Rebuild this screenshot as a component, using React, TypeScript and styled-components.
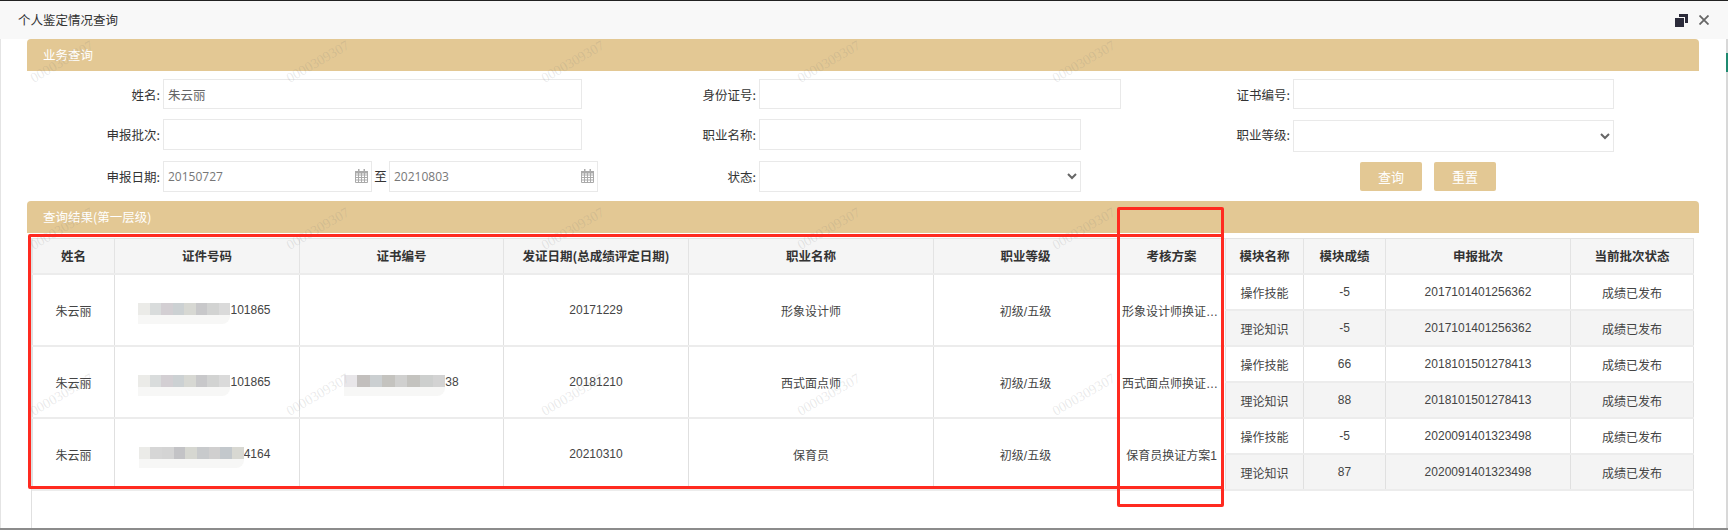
import React, { FC } from "react";
import styled, { createGlobalStyle } from "styled-components";

const GlobalStyle = createGlobalStyle`
  html, body {
    margin: 0;
    padding: 0;
    background: #fff;
  }
  body {
    font-family: "Noto Sans CJK SC", "Liberation Sans", sans-serif;
    font-size: 12.5px;
    color: #333;
  }
`;

const Window = styled.div`
  position: relative;
  width: 1728px;
  height: 530px;
  box-sizing: border-box;
  display: flex;
  flex-direction: column;
  overflow: hidden;
  border-bottom: 2px solid #8c8c8c;
  box-shadow: inset 1px 0 #e4e4e4;
`;

const TitleBar = styled.div`
  flex: none;
  height: 39px;
  box-sizing: border-box;
  display: flex;
  align-items: center;
  padding: 0 19px 0 18px;
  background: #f8f8f8;
  border-top: 1px solid #222;
  color: #333;
  font-size: 12.5px;
`;

const TitleText = styled.span`
  flex: 1;
  line-height: 38px;
`;

const TitleIcons = styled.div`
  display: flex;
  align-items: center;
  gap: 11px;
`;

const Content = styled.div`
  flex: 1;
  min-height: 0;
  display: flex;
  flex-direction: column;
  padding: 0 29px 0 27px;
`;

const PanelHead = styled.div`
  flex: none;
  height: 32px;
  line-height: 32px;
  padding-left: 16px;
  background: #e3c894;
  border-radius: 4px 4px 0 0;
  color: #fff;
  font-size: 12.5px;
`;

const QueryForm = styled.div`
  flex: none;
  display: grid;
  grid-template-columns: 136px 435px 161px 362px 172px 321px;
  grid-template-rows: 30px 31px 32px;
  row-gap: 10px;
  padding: 8px 0 9px;
`;

const FieldLabel = styled.label`
  align-self: center;
  text-align: right;
  padding-right: 3px;
  color: #333;
  font-size: 12.5px;
`;

const TextInput = styled.input<{ $w: number }>`
  width: ${(p) => p.$w}px;
  height: 100%;
  box-sizing: border-box;
  padding: 0 4px;
  border: 1px solid #e9e9e9;
  outline: none;
  background: #fff;
  color: #666;
  font-family: "Noto Sans CJK SC", sans-serif;
  font-size: 12.5px;
`;

const SelectBox = styled.select<{ $w: number; $tall?: boolean }>`
  width: ${(p) => p.$w}px;
  height: ${(p) => (p.$tall ? "32px" : "31px")};
  margin-top: 1px;
  box-sizing: border-box;
  border: 1px solid #e9e9e9;
  outline: none;
  background: #fff;
  color: #666;
`;

const DateRow = styled.div`
  display: flex;
  height: 31px;
  margin-top: 1px;
`;

const DateField = styled.div`
  position: relative;
  width: 209px;
  height: 100%;
`;

const DateInput = styled.input`
  width: 100%;
  height: 100%;
  box-sizing: border-box;
  padding: 0 4px;
  border: 1px solid #e9e9e9;
  outline: none;
  color: #777;
  font-family: "Open Sans", sans-serif;
  font-size: 12px;
`;

const CalendarMark = styled.svg`
  position: absolute;
  right: 4px;
  top: 8px;
`;

const RangeSep = styled.span`
  width: 17px;
  line-height: 29px;
  text-align: center;
  color: #333;
  font-size: 12.5px;
`;

const ButtonRow = styled.div`
  display: flex;
  gap: 12px;
  margin: 2px 0 0 67px;
`;

const QueryButton = styled.button`
  width: 62px;
  height: 29px;
  padding: 0;
  border: none;
  border-radius: 2px;
  background: #e3c894;
  color: #fff;
  font-family: "Noto Sans CJK SC", sans-serif;
  font-size: 13px;
`;

const TableFrame = styled.div`
  flex: 1;
  margin: 5px 5px 0 4px;
  border-left: 1px solid #e0e0e0;
  border-right: 1px solid #e0e0e0;
`;

const ResultTable = styled.table`
  width: 100%;
  table-layout: fixed;
  border-collapse: collapse;
`;

const Col = styled.col<{ $w: number }>`
  width: ${(p) => p.$w}px;
`;

const HeadCell = styled.th`
  height: 35px;
  padding: 0;
  box-sizing: border-box;
  background: #f5f5f5;
  border: 1px solid #e3e3e3;
  border-bottom: 2px solid #ececec;
  color: #333;
  font-size: 12.5px;
  font-weight: 700;
`;

const Cell = styled.td<{ $alt?: boolean }>`
  height: 36px;
  padding: 1px 4px 0;
  box-sizing: border-box;
  text-align: center;
  white-space: nowrap;
  overflow: hidden;
  text-overflow: ellipsis;
  background: ${(p) => (p.$alt ? "#f4f4f4" : "#fff")};
  border-left: 1px solid #e0e0e0;
  border-right: 1px solid #e0e0e0;
  border-bottom: 2px solid #ececec;
  color: #444;
  font-family: "Liberation Sans", "Noto Sans CJK SC", sans-serif;
  font-size: 12px;
`;

const IdValue = styled.span`
  margin-right: 5px;
`;

const Mosaic = styled.span`
  position: relative;
  display: inline-flex;
  height: 12px;
  vertical-align: middle;
  margin-top: -3px;
`;

const MosaicBlock = styled.i<{ $c: string }>`
  display: block;
  flex: 1;
  height: 12px;
  background: ${(p) => p.$c};
`;

const MosaicFade = styled.i`
  position: absolute;
  left: 0;
  right: 0;
  top: 12px;
  height: 9px;
  border-radius: 0 0 8px 0;
  background: #f7f7f6;
`;

const Watermarks = styled.div`
  position: absolute;
  left: 30px;
  top: 44px;
  display: grid;
  grid-template-columns: repeat(5, 255.5px);
  grid-auto-rows: 166.5px;
  pointer-events: none;
`;

const Watermark = styled.span`
  width: 64px;
  height: 36px;
  display: flex;
  align-items: center;
  justify-content: center;
  white-space: nowrap;
  transform: rotate(-30deg);
  font-family: "Liberation Serif", serif;
  font-size: 14px;
  color: rgba(120, 120, 120, 0.16);
`;

const Highlight = styled.div<{ $l: number; $t: number; $w: number; $h: number }>`
  position: absolute;
  left: ${(p) => p.$l}px;
  top: ${(p) => p.$t}px;
  width: ${(p) => p.$w}px;
  height: ${(p) => p.$h}px;
  box-sizing: border-box;
  border: 3px solid #ff2a20;
  border-radius: 2px;
  pointer-events: none;
`;

const RightEdge = styled.div`
  position: absolute;
  right: 0;
  top: 39px;
  bottom: 0;
  width: 2px;
  background: linear-gradient(#d8d8d8 14px, #1f8a70 14px, #1f8a70 33px, #d8d8d8 33px);
`;

const RestoreIcon: FC = () => (
  <svg width="13" height="13" viewBox="0 0 13 13">
    <rect x="0" y="4" width="9" height="9" fill="#2b2b3a" />
    <path d="M4 0h9v9h-3V3H4z" fill="#2b2b3a" />
  </svg>
);

const CloseIcon: FC = () => (
  <svg width="10" height="10" viewBox="0 0 10 10">
    <path d="M0.5 0.5l9 9M9.5 0.5l-9 9" stroke="#666" strokeWidth="1.8" fill="none" />
  </svg>
);

const CalendarIcon: FC = () => (
  <CalendarMark width="13" height="14" viewBox="0 0 13 14">
    <path
      d="M0.5 3v10.5h12V3zM0.5 6h12M0.5 8.5h12M0.5 11h12M3.5 3v10.5M6.5 3v10.5M9.5 3v10.5"
      stroke="#aaa"
      fill="none"
    />
    <rect x="0" y="2" width="13" height="2.5" fill="#aaa" />
    <rect x="3" y="0" width="1.5" height="3" fill="#aaa" />
    <rect x="8.5" y="0" width="1.5" height="3" fill="#aaa" />
  </CalendarMark>
);

const idShades = ["#ebebe8", "#d9dcdc", "#d3cfd3", "#ccd1d3", "#d7d8d3", "#c8c8ca", "#d2d3d2", "#dadada"];
const idShadesLong = ["#ebebe8", "#d6d6d6", "#d4d4d4", "#c3c3c6", "#d6d7d1", "#c8cacc", "#d0cfcf", "#c3c8cc", "#d8d8d2"];
const certShades = ["#e8e6e9", "#c2bfbd", "#cbcfd1", "#c4c3bf", "#d0d0cf", "#c4c3bf", "#cdcfce", "#d3d3d3"];

const Blurred: FC<{ shades: string[]; width: number }> = ({ shades, width }) => (
  <Mosaic style={{ width }}>
    {shades.map((c, i) => (
      <MosaicBlock key={i} $c={c} />
    ))}
    <MosaicFade />
  </Mosaic>
);

const columns = [82, 185, 204, 185, 245, 184, 108, 78, 82, 185, 123];
const headers = [
  "姓名",
  "证件号码",
  "证书编号",
  "发证日期(总成绩评定日期)",
  "职业名称",
  "职业等级",
  "考核方案",
  "模块名称",
  "模块成绩",
  "申报批次",
  "当前批次状态",
];

const records = [
  {
    id: <IdValue><Blurred shades={idShades} width={92} />101865</IdValue>,
    cert: null,
    date: "20171229",
    job: "形象设计师",
    plan: "形象设计师换证方案1",
    batch: "2017101401256362",
    scores: ["-5", "-5"],
  },
  {
    id: <IdValue><Blurred shades={idShades} width={92} />101865</IdValue>,
    cert: <><Blurred shades={certShades} width={101} />38</>,
    date: "20181210",
    job: "西式面点师",
    plan: "西式面点师换证方案1",
    batch: "2018101501278413",
    scores: ["66", "88"],
  },
  {
    id: <IdValue><Blurred shades={idShadesLong} width={105} />4164</IdValue>,
    cert: null,
    date: "20210310",
    job: "保育员",
    plan: "保育员换证方案1",
    batch: "2020091401323498",
    scores: ["-5", "87"],
  },
];

const App: FC = () => {
  return (
    <Window>
      <GlobalStyle />
      <TitleBar>
        <TitleText>个人鉴定情况查询</TitleText>
        <TitleIcons>
          <RestoreIcon />
          <CloseIcon />
        </TitleIcons>
      </TitleBar>

      <Content>
        <PanelHead>业务查询</PanelHead>
        <QueryForm>
          <FieldLabel>姓名:</FieldLabel>
          <TextInput $w={419} defaultValue="朱云丽" />
          <FieldLabel>身份证号:</FieldLabel>
          <TextInput $w={362} />
          <FieldLabel>证书编号:</FieldLabel>
          <TextInput $w={321} />

          <FieldLabel>申报批次:</FieldLabel>
          <TextInput $w={419} />
          <FieldLabel>职业名称:</FieldLabel>
          <TextInput $w={322} />
          <FieldLabel>职业等级:</FieldLabel>
          <SelectBox $w={321} $tall>
            <option></option>
          </SelectBox>

          <FieldLabel>申报日期:</FieldLabel>
          <DateRow>
            <DateField>
              <DateInput defaultValue="20150727" />
              <CalendarIcon />
            </DateField>
            <RangeSep>至</RangeSep>
            <DateField>
              <DateInput defaultValue="20210803" />
              <CalendarIcon />
            </DateField>
          </DateRow>
          <FieldLabel>状态:</FieldLabel>
          <SelectBox $w={322}>
            <option></option>
          </SelectBox>
          <span />
          <ButtonRow>
            <QueryButton>查询</QueryButton>
            <QueryButton>重置</QueryButton>
          </ButtonRow>
        </QueryForm>

        <PanelHead>查询结果(第一层级)</PanelHead>
        <TableFrame>
          <ResultTable>
            <colgroup>
              {columns.map((w, i) => (
                <Col key={i} $w={w} />
              ))}
            </colgroup>
            <thead>
              <tr>
                {headers.map((h) => (
                  <HeadCell key={h}>{h}</HeadCell>
                ))}
              </tr>
            </thead>
            <tbody>
              {records.map((r) => (
                <React.Fragment key={r.batch}>
                  <tr>
                    <Cell rowSpan={2}>朱云丽</Cell>
                    <Cell rowSpan={2}>{r.id}</Cell>
                    <Cell rowSpan={2}>{r.cert}</Cell>
                    <Cell rowSpan={2}>{r.date}</Cell>
                    <Cell rowSpan={2}>{r.job}</Cell>
                    <Cell rowSpan={2}>初级/五级</Cell>
                    <Cell rowSpan={2}>{r.plan}</Cell>
                    <Cell>操作技能</Cell>
                    <Cell>{r.scores[0]}</Cell>
                    <Cell>{r.batch}</Cell>
                    <Cell>成绩已发布</Cell>
                  </tr>
                  <tr>
                    <Cell $alt>理论知识</Cell>
                    <Cell $alt>{r.scores[1]}</Cell>
                    <Cell $alt>{r.batch}</Cell>
                    <Cell $alt>成绩已发布</Cell>
                  </tr>
                </React.Fragment>
              ))}
            </tbody>
          </ResultTable>
        </TableFrame>
      </Content>

      <Watermarks>
        {Array.from({ length: 15 }).map((_, i) => (
          <Watermark key={i}>0000309307</Watermark>
        ))}
      </Watermarks>
      <Highlight $l={28} $t={234} $w={1196} $h={255} />
      <Highlight $l={1117} $t={207} $w={107} $h={300} />
      <RightEdge />
    </Window>
  );
};

export default App;
